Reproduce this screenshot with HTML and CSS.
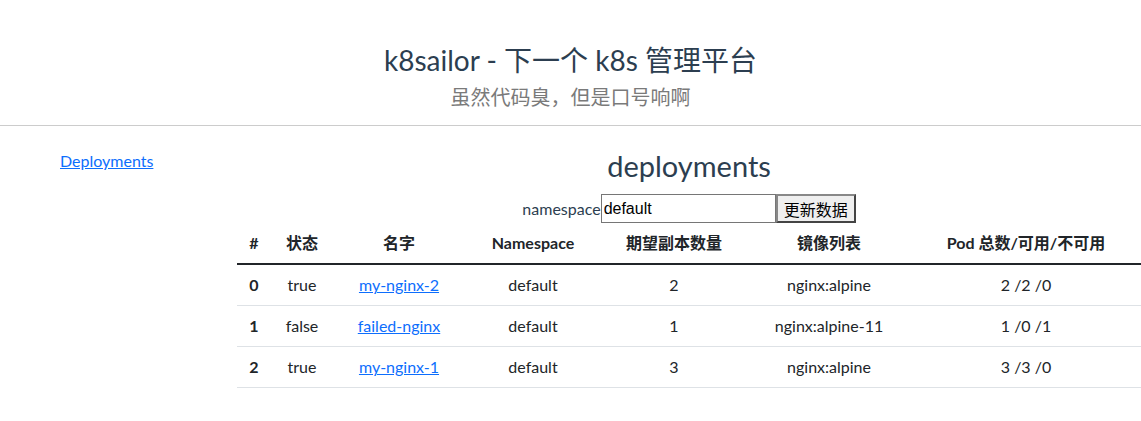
FILE: index.html
```html
<!DOCTYPE html>
<html lang="zh-CN">
<head>
<meta charset="utf-8">
<title>k8sailor</title>
<link rel="stylesheet" href="styles.css">
</head>
<body>
<div class="app">
  <header class="header">
    <h1 class="title">k8sailor - 下一个 k8s 管理平台</h1>
    <p class="subtitle">虽然代码臭，但是口号响啊</p>
  </header>
  <div class="layout">
    <nav class="sidebar">
      <a href="#" class="nav-link">Deployments</a>
    </nav>
    <main class="main">
      <h2 class="heading">deployments</h2>
      <div class="form-row">
        <label class="ns-label" for="ns">namespace</label><input id="ns" class="ns-input" type="text" value="default"><button class="btn">更新数据</button>
      </div>
      <table class="table">
        <colgroup>
          <col class="c1"><col class="c2"><col class="c3"><col class="c4"><col class="c5"><col class="c6"><col class="c7">
        </colgroup>
        <thead>
          <tr>
            <th>#</th><th>状态</th><th>名字</th><th>Namespace</th><th>期望副本数量</th><th>镜像列表</th><th>Pod 总数/可用/不可用</th>
          </tr>
        </thead>
        <tbody>
          <tr>
            <th>0</th><td>true</td><td><a href="#">my-nginx-2</a></td><td>default</td><td>2</td><td>nginx:alpine</td><td>2 /2 /0</td>
          </tr>
          <tr>
            <th>1</th><td>false</td><td><a href="#">failed-nginx</a></td><td>default</td><td>1</td><td>nginx:alpine-11</td><td>1 /0 /1</td>
          </tr>
          <tr>
            <th>2</th><td>true</td><td><a href="#">my-nginx-1</a></td><td>default</td><td>3</td><td>nginx:alpine</td><td>3 /3 /0</td>
          </tr>
        </tbody>
      </table>
    </main>
  </div>
</div>
</body>
</html>
```
FILE: styles.css
```css
html, body {
  margin: 0;
  padding: 0;
  background: #fff;
}
body {
  font-family: Lato, "Noto Sans CJK SC", sans-serif;
  font-size: 16px;
  line-height: 24px;
  color: #2c3e50;
}
.header {
  display: flex;
  flex-direction: column;
  align-items: center;
  gap: 5px;
  padding: 42px 0 14px;
  border-bottom: 1px solid #cccccc;
}
.title {
  margin: 0;
  font-size: 28px;
  line-height: 36px;
  font-weight: 400;
  color: #2c3e50;
}
.subtitle {
  margin: 0;
  font-size: 20px;
  line-height: 28px;
  color: #7a7a7a;
}
.layout {
  display: flex;
}
.sidebar {
  width: 177px;
  padding: 23px 0 0 60px;
  flex: none;
}
.nav-link {
  color: #0d6efd;
  text-decoration: underline;
}
.main {
  flex: 1;
  padding-top: 22px;
  display: flex;
  flex-direction: column;
  align-items: center;
}
.heading {
  margin: 0;
  font-size: 29px;
  line-height: 36px;
  font-weight: 400;
  color: #2c3e50;
}
.form-row {
  margin-top: 10px;
  display: flex;
  align-items: center;
  height: 29px;
}
.ns-label {
  font-size: 16px;
  color: #2c3e50;
}
.ns-input {
  box-sizing: border-box;
  width: 175px;
  height: 29px;
  margin: 0;
  padding: 1px 2px;
  border: 1px solid #767676;
  font-family: "Liberation Sans", "Noto Sans CJK SC", sans-serif;
  font-size: 16px;
  color: #000;
  background: #fff;
}
.btn {
  box-sizing: border-box;
  height: 29px;
  margin: 0;
  padding: 0 6px;
  border: 2px solid #444;
  border-top-color: #888;
  border-left-color: #888;
  background: #efefef;
  font-family: "Noto Sans CJK SC", sans-serif;
  font-size: 16px;
  color: #000;
}
.table {
  width: 100%;
  border-collapse: collapse;
  table-layout: fixed;
  color: #212529;
}
.c1 { width: 34px; }
.c2 { width: 62px; }
.c3 { width: 132px; }
.c4 { width: 136px; }
.c5 { width: 146px; }
.c6 { width: 164px; }
.c7 { width: auto; }
.table th, .table td {
  padding: 8px 0;
  text-align: center;
  border-bottom: 1px solid #dee2e6;
  white-space: nowrap;
}
.table thead th {
  font-weight: 700;
  border-bottom: 2px solid #212529;
}
.table tbody th {
  font-weight: 700;
}
.table a {
  color: #0d6efd;
  text-decoration: underline;
}
```
